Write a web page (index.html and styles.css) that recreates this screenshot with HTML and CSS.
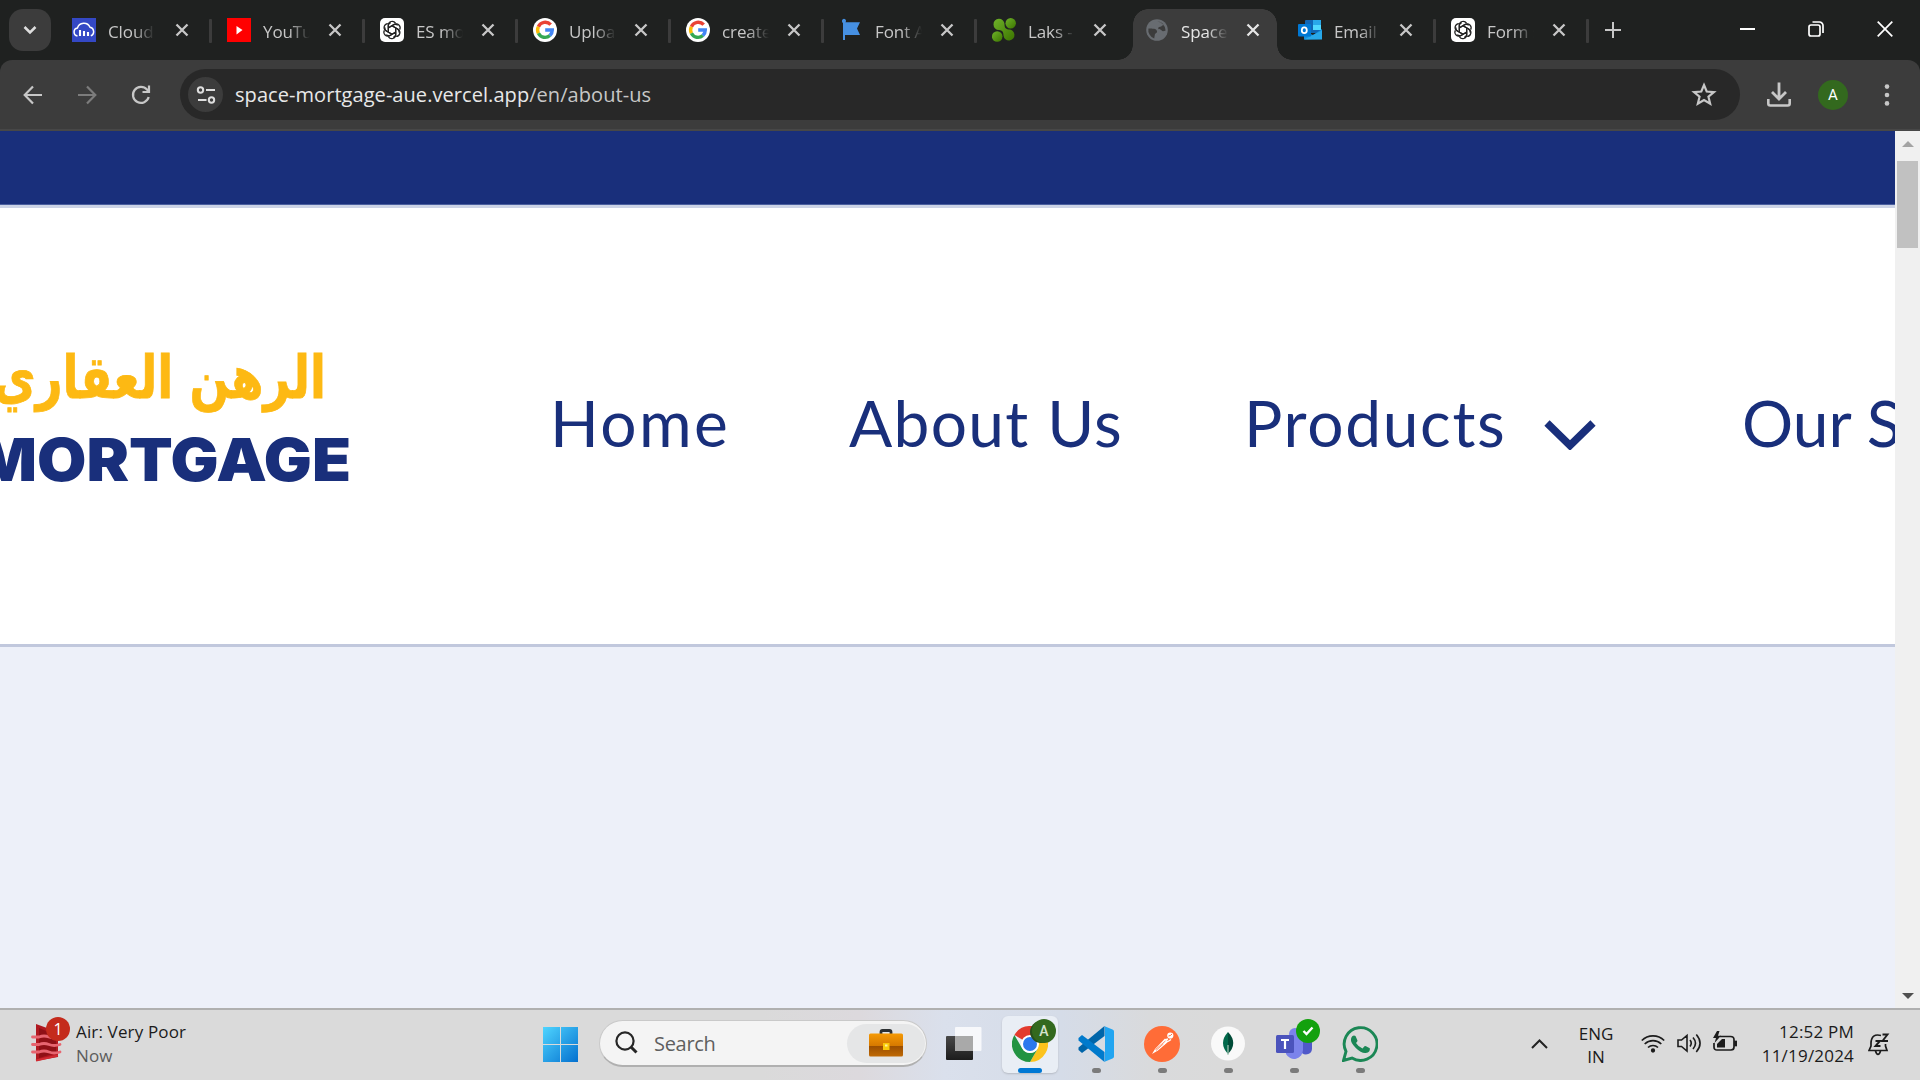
FILE: index.html
```html
<!DOCTYPE html>
<html lang="en">
<head>
<meta charset="utf-8">
<title>Space Mortgage</title>
<link rel="stylesheet" href="styles.css">
</head>
<body>
<svg width="0" height="0" class="defs">
  <defs>
    <symbol id="x" viewBox="0 0 14 14"><path d="M1.500 1.500l11 11M12.500 1.500l-11 11" fill="none" stroke="currentColor" stroke-width="2.300"/></symbol>
    <symbol id="gpt" viewBox="0 0 24 24"><rect width="24" height="24" rx="5" fill="#fff"/>
      <g fill="none" stroke="#222" stroke-width="1.250" stroke-linejoin="round">
        <g id="petal"><path d="M8.300 13.800V7.200a3.900 3.900 0 0 1 7.200-2M8.300 9.900l5.200-3.100a3.800 3.800 0 0 1 4.300.4"/></g>
        <use href="#petal" transform="rotate(60 12 12)"/><use href="#petal" transform="rotate(120 12 12)"/><use href="#petal" transform="rotate(180 12 12)"/><use href="#petal" transform="rotate(240 12 12)"/><use href="#petal" transform="rotate(300 12 12)"/>
      </g></symbol>
    <symbol id="google" viewBox="0 0 24 24"><circle cx="12" cy="12" r="12" fill="#fff"/>
      <g fill="none" stroke-width="3.400"><path d="M17.700 6.700A7.400 7.400 0 0 0 5.400 8.700" stroke="#ea4335"/><path d="M5.400 8.700a7.400 7.400 0 0 0 0 6.600" stroke="#fbbc05"/><path d="M5.400 15.300a7.400 7.400 0 0 0 11.500 2.200" stroke="#34a853"/><path d="M12.200 12H19.300a7.400 7.400 0 0 1-2.400 5.500" stroke="#4285f4"/></g></symbol>
    <linearGradient id="leaf" x1="0" y1="0" x2="1" y2="1"><stop offset="0" stop-color="#6fb22a"/><stop offset="1" stop-color="#3c7500"/></linearGradient>
    <linearGradient id="win" x1="0" y1="0" x2="1" y2="1"><stop offset="0" stop-color="#4fd5ff"/><stop offset="1" stop-color="#0470cf"/></linearGradient>
    <linearGradient id="bag" x1="0" y1="0" x2="0" y2="1"><stop offset="0" stop-color="#f59a05"/><stop offset=".55" stop-color="#d57800"/><stop offset=".56" stop-color="#9c4f00"/><stop offset="1" stop-color="#c06a05"/></linearGradient>
    <linearGradient id="dark" x1="0" y1="0" x2="0" y2="1"><stop offset="0" stop-color="#484848"/><stop offset="1" stop-color="#1c1c1c"/></linearGradient>
  </defs>
</svg>
<div class="screen">
  <header class="tabstrip">
    <div class="tab-search"><svg width="14" height="10" viewBox="0 0 14 10"><path d="M1.500 2l5.500 5.500L12.500 2" fill="none" stroke="#dedede" stroke-width="2.500"/></svg></div>
    <div class="tabs">
      <div class="tab first"><svg class="fav" viewBox="0 0 24 24"><rect width="24" height="24" fill="#3448c5"/><path d="M5.500 18a4 4 0 0 1-.1-7.900A6.700 6.700 0 0 1 18 9.200 4.500 4.500 0 0 1 18.800 17.800" fill="none" stroke="#fff" stroke-width="1.500"/><path d="M8 12v6M12 13v5M16 14v4" stroke="#fff" stroke-width="2.100"/></svg><span class="title">Cloudin</span><svg class="close"><use href="#x"/></svg></div>
      <div class="tab"><svg class="fav" viewBox="0 0 24 24"><rect width="24" height="24" fill="#f00"/><path d="M9.500 8l6 4-6 4.500z" fill="#fff"/></svg><span class="title">YouTube</span><svg class="close"><use href="#x"/></svg></div>
      <div class="tab"><svg class="fav"><use href="#gpt"/></svg><span class="title">ES mod</span><svg class="close"><use href="#x"/></svg></div>
      <div class="tab"><svg class="fav"><use href="#google"/></svg><span class="title">Upload</span><svg class="close"><use href="#x"/></svg></div>
      <div class="tab"><svg class="fav"><use href="#google"/></svg><span class="title">create r</span><svg class="close"><use href="#x"/></svg></div>
      <div class="tab"><svg class="fav" viewBox="0 0 24 24"><path d="M3 3a2 2 0 1 1 3.500 1.200H21l-3 6.300 3 6.500H6v5H4V5a2 2 0 0 1-1-2z" fill="#4690e2"/></svg><span class="title">Font A</span><svg class="close"><use href="#x"/></svg></div>
      <div class="tab last-before"><svg class="fav" viewBox="0 0 24 24"><g fill="url(#leaf)"><circle cx="18.700" cy="5.200" r="5.200"/><circle cx="5.200" cy="18.500" r="5.300"/><path d="M1.500 6.500a5.500 5.500 0 0 1 11-.5c0 3 .6 5 4 5.500a5.500 5.500 0 1 1-5 6c0-3.500-1-5.200-4.500-5.500a5.500 5.500 0 0 1-5.500-5.500z"/></g></svg><span class="title">Laks - S</span><svg class="close"><use href="#x"/></svg></div>
      <div class="tab active"><svg class="fav" viewBox="0 0 24 24"><circle cx="12" cy="12" r="10.800" fill="#686c71"/><path d="M3.400 10.600c4 .2 8-.3 8.600 2.600.4 2-2 1.700-2.200 3.800l-.6 3.500A9 9 0 0 1 3.400 10.600zM12.500 3.500c2.600 0 5 1.500 6.300 3.500-1.500 0-2 1.700-3.600 1.700-1.500 0-2.600 1-1.800 2.200.8 1 2.600.1 3.300 1.600.4 1 2.300.8 3.900-.1A9 9 0 0 0 12.500 3.500z" fill="#3c3c3c"/></svg><span class="title">Space M</span><svg class="close"><use href="#x"/></svg></div>
      <div class="tab"><svg class="fav" viewBox="0 0 24 24"><rect x="7" y="2" width="16" height="13" rx="1" fill="#1066b5"/><path d="M15 2h8v5h-8z" fill="#28a8ea"/><path d="M15 7h8v5h-8z" fill="#50d9ff"/><path d="M6 21.500V13l9 4 9-6v10z" fill="#1490df"/><path d="M6 21.500l18-9v9z" fill="#28a8ea"/><rect y="6" width="13" height="12.500" rx="1" fill="#0078d4"/><ellipse cx="6.300" cy="12.200" rx="2.500" ry="2.900" fill="none" stroke="#fff" stroke-width="1.800"/></svg><span class="title">Email -</span><svg class="close"><use href="#x"/></svg></div>
      <div class="tab"><svg class="fav"><use href="#gpt"/></svg><span class="title">Form s</span><svg class="close"><use href="#x"/></svg></div>
    </div>
    <svg class="plus" viewBox="0 0 16 16"><path d="M8 0v16M0 8h16" stroke="#c7c7c7" stroke-width="2"/></svg>
    <div class="window-buttons">
      <svg width="15" height="16" viewBox="0 0 15 16"><path d="M0 8h15" stroke="#fff" stroke-width="2"/></svg>
      <svg width="16" height="16" viewBox="0 0 16 16" fill="none" stroke="#fff" stroke-width="1.700"><rect x="1" y="4" width="11" height="11" rx="2"/><path d="M4.500 1H11.500a3.500 3.500 0 0 1 3.500 3.500V12"/></svg>
      <svg width="16" height="16" viewBox="0 0 16 16"><path d="M.7.7l14.600 14.600M15.300.7L.7 15.300" stroke="#fff" stroke-width="1.700"/></svg>
    </div>
  </header>

  <div class="toolbar">
    <div class="nav-buttons">
      <svg width="20" height="20" viewBox="0 0 20 20"><path d="M19 10H2M10 1.500L1.700 10l8.300 8.500" fill="none" stroke="#c7c7c7" stroke-width="2.200"/></svg>
      <svg width="20" height="20" viewBox="0 0 20 20"><path d="M1 10h17M10 1.500l8.300 8.500L10 18.500" fill="none" stroke="#7c7c7c" stroke-width="2.200"/></svg>
      <svg width="20" height="20" viewBox="0 0 20 20"><path d="M17.700 12A8 8 0 1 1 16 4.600L18 7M18 .5V7H11.500" fill="none" stroke="#c7c7c7" stroke-width="2.200"/></svg>
    </div>
    <div class="omnibox">
      <div class="site-info"><svg width="20" height="18" viewBox="0 0 20 18" fill="none" stroke="#dedede" stroke-width="2"><circle cx="4.500" cy="4" r="2.700"/><path d="M10 4h9M2 14h8.500"/><circle cx="15.500" cy="14" r="2.700"/></svg></div>
      <div class="url"><span class="host">space-mortgage-aue.vercel.app</span><span class="path">/en/about-us</span></div>
      <svg class="star" viewBox="0 0 24 24"><path d="M12 2.800l2.500 6 6.700.5-5.100 4.300 1.600 6.500L12 16.600l-5.700 3.500 1.600-6.500L2.800 9.300l6.700-.5z" fill="none" stroke="#c7c7c7" stroke-width="2"/></svg>
    </div>
    <svg class="download" viewBox="0 0 24 26"><path d="M12 .5v16M5 10l7 7 7-7" fill="none" stroke="#c7c7c7" stroke-width="2.800"/><path d="M1.300 17v4.500a2 2 0 0 0 2 2h17.400a2 2 0 0 0 2-2V17" fill="none" stroke="#c7c7c7" stroke-width="2.600"/></svg>
    <div class="profile">A</div>
    <svg class="dots" viewBox="0 0 6 22" fill="#c7c7c7"><circle cx="3" cy="2.600" r="2.300"/><circle cx="3" cy="11" r="2.300"/><circle cx="3" cy="19.400" r="2.300"/></svg>
  </div>

  <main class="viewport">
    <div class="page">
      <div class="topbar"></div>
      <div class="site-header">
        <svg class="logo" width="360" height="160" viewBox="0 0 360 160">
          <text class="logo-ar" x="-7" y="67" textLength="333" lengthAdjust="spacingAndGlyphs">الرهن العقاري</text>
          <text class="logo-en" x="-24" y="150" textLength="375" lengthAdjust="spacingAndGlyphs">MORTGAGE</text>
        </svg>
        <nav class="site-nav">
          <a class="home">Home</a>
          <a class="about">About Us</a>
          <a class="products">Products</a>
          <svg class="chev" width="52" height="30" viewBox="0 0 52 30"><path d="M3 3L26 25.500 49 3" fill="none" stroke="#192f7b" stroke-width="7.500"/></svg>
          <a class="services">Our Services</a>
        </nav>
      </div>
    </div>
    <div class="scrollbar">
      <svg width="12" height="6" viewBox="0 0 12 6"><path d="M0 6L6 0l6 6z" fill="#a3a3a3"/></svg>
      <div class="thumb"></div>
      <svg class="down" width="12" height="6" viewBox="0 0 12 6"><path d="M0 0h12L6 6z" fill="#505050"/></svg>
    </div>
  </main>

  <footer class="taskbar">
    <div class="widget">
      <div class="air"><svg width="32" height="38" viewBox="0 0 32 38"><path d="M5 0l22 8v25L5 37z" fill="#b01820"/><path d="M8 4l17 7v18L8 34z" fill="#8f1016"/><g fill="none" stroke="#e76570" stroke-width="2.800" stroke-linecap="round"><path d="M1.500 13H8q5-2 10 0t11 0M1.500 20.500H8q5-2 10 0t11 0M1.500 28H8q5-2 10 0t11 0"/></g><path d="M5 36.500l22-5" stroke="#d12a32" stroke-width="2"/></svg><span class="count">1</span></div>
      <div class="air-text"><span>Air: Very Poor</span><span class="now">Now</span></div>
    </div>
    <svg class="start" viewBox="0 0 35 35"><path d="M0 0h17v17H0zM18 0h17v17H18zM0 18h17v17H0zM18 18h17v17H18z" fill="url(#win)"/></svg>
    <div class="search">
      <svg width="23" height="24" viewBox="0 0 23 24"><circle cx="10" cy="10" r="8.600" fill="none" stroke="#262626" stroke-width="2.200"/><path d="M16 16l5.500 5.500" stroke="#262626" stroke-width="3"/></svg>
      <span>Search</span>
      <div class="highlight"><svg width="34" height="28" viewBox="0 0 34 28"><path d="M12 5V3q0-1.500 1.500-1.500h7Q22 1.500 22 3v2" fill="none" stroke="#2c3033" stroke-width="2.800"/><rect y="4.500" width="34" height="23" rx="1.500" fill="url(#bag)"/><rect x="14" y="14" width="6.500" height="7" fill="#f8c90a"/><rect x="16" y="15.500" width="2.500" height="2" fill="#fff29a"/></svg></div>
    </div>
    <div class="apps">
      <div class="app"><svg width="36" height="36" viewBox="0 0 36 36"><rect y="10" width="27" height="24" rx="1" fill="url(#dark)"/><rect x="9" y="1" width="26.500" height="24" rx="1" fill="#fff" fill-opacity=".78"/><rect x="9" y="10" width="18" height="15" fill="#a9a9a9"/></svg></div>
      <div class="app current"><svg width="36" height="36" viewBox="0 0 36 36"><path d="M18 18L2.400 9A18 18 0 0 1 33.600 9z" fill="#e33b2e"/><path d="M18 0a18 18 0 0 1 15.600 9H18z" fill="#e33b2e"/><path d="M18 9h15.600A18 18 0 0 1 18 36l7.800-13.500z" fill="#fcc31e"/><path d="M2.400 9l7.800 13.500A9 9 0 0 0 25.800 22.500L18 36A18 18 0 0 1 2.400 9z" fill="#229342"/><circle cx="18" cy="18" r="9" fill="#fff"/><circle cx="18" cy="18" r="7" fill="#2c78ee"/></svg><span class="badge green">A</span><i></i></div>
      <div class="app"><svg width="36" height="36" viewBox="0 0 36 36"><path d="M26.500 0v10L4 27l-3.500-3v-2.500z" fill="#0065a9"/><path d="M4 9L.5 12v2.500L26.500 36V26z" fill="#007acc"/><path d="M26 0l8.500 3.500q1.500.7 1.500 2v25q0 1.300-1.500 2L26 36q1-.5 1-2V2q0-1.500-1-2z" fill="#22a5f1"/></svg><i></i></div>
      <div class="app"><svg width="36" height="36" viewBox="0 0 36 36"><circle cx="18" cy="18" r="18" fill="#ff6c37"/><path d="M8 28l3-5L21 12.500l3.500 3L14 24.500z" fill="#fff"/><path d="M11.500 23.500l11-9.500M12 24.500l9.500-8.500" stroke="#ff6c37" stroke-width=".7"/><circle cx="26.300" cy="9.500" r="3.100" fill="#fff"/><path d="M24 13l-3 1M24 15.500l3-2M23 15l-3.500 3.500" stroke="#fff" stroke-width="1.500"/><path d="M24.500 10q2 0 3.500-2" fill="none" stroke="#ff6c37" stroke-width="1"/></svg><i></i></div>
      <div class="app"><svg width="36" height="36" viewBox="0 0 36 36"><circle cx="18" cy="17.500" r="17" fill="#f9f9f9"/><path d="M18 6q-10 11 0 22z" fill="#01684a"/><path d="M18 6q10.500 11 0 22z" fill="#004b37"/><path d="M18 19v10" stroke="#a8c9b7" stroke-width="1.200"/></svg><i></i></div>
      <div class="app teams"><svg width="36" height="36" viewBox="0 0 36 36"><circle cx="30" cy="8" r="4.500" fill="#5059c9"/><path d="M25 13h11v10a6 6 0 0 1-10 4z" fill="#5059c9"/><circle cx="19" cy="8" r="6" fill="#7b83eb"/><path d="M10 12h17v12a9 9 0 0 1-17 4z" fill="#7b83eb"/><rect x="0" y="9" width="18" height="18" rx="1.500" fill="#4b53bc"/><path d="M5 14h8M9 14v9" stroke="#fff" stroke-width="2.200"/></svg><span class="badge check"><svg width="12" height="10" viewBox="0 0 12 10"><path d="M1.500 5l3 3 6-6.500" fill="none" stroke="#fff" stroke-width="2.400"/></svg></span><i></i></div>
      <div class="app"><svg width="36" height="36" viewBox="0 0 36 36"><path d="M1.500 34.500l2.500-9A16.400 16.400 0 1 1 10 32z" fill="none" stroke="#1b8755" stroke-width="2.900"/><path d="M10.500 10q1.500-1 3 0l2 4.500q0 1.200-1.500 2.500 2.500 4 6.500 5.500l2-2.300q.7-.5 1.500 0l3.800 2q.7 4-4 4.800-4.500.5-10-5T9 13q.3-2 1.500-3z" fill="#1b8755"/></svg><i></i></div>
    </div>
    <div class="tray">
      <svg class="up" width="17" height="10" viewBox="0 0 17 10"><path d="M1 9l7.500-7.500L16 9" fill="none" stroke="#222" stroke-width="2"/></svg>
      <div class="lang"><span>ENG</span><span>IN</span></div>
      <div class="status">
        <svg width="24" height="24" viewBox="0 0 24 24" fill="none" stroke="#1c1c1c" stroke-width="1.700"><path d="M.8 9.500a16 16 0 0 1 22.400 0M3.700 13a12 12 0 0 1 16.600 0M7 16.500a7.300 7.300 0 0 1 10 0"/><circle cx="12" cy="19.500" r="1.300" fill="#1c1c1c"/></svg>
        <svg width="24" height="24" viewBox="0 0 24 24" fill="none" stroke="#1c1c1c" stroke-width="1.600"><path d="M1 9v6.500h3.500L10 20V4.500L4.500 9zM13 9q2.500 3.200 0 6.400M16 6.500q5 5.700 0 11.500M19.300 3.500q7.500 8.700 0 17.400"/></svg>
        <svg width="24" height="24" viewBox="0 0 24 24" fill="none" stroke="#1c1c1c" stroke-width="1.700"><path d="M7 5.500h10.500q3.500 0 3.500 3.200V16q0 3-3 3H4q-3 0-3-3v-4"/><path d="M22 10.500h1.200v4H22z" fill="#1c1c1c"/><path d="M4 16V13l5-5h3v8.500H4z" fill="#1c1c1c" stroke="none"/><path d="M4 0L0 7H3L1.500 12 8 4.800H5L6.500 0z" fill="#1c1c1c" stroke="none"/></svg>
      </div>
      <div class="clock"><span class="time">12:52 PM</span><span class="date">11/19/2024</span></div>
      <svg class="bell" width="22" height="24" viewBox="0 0 22 24" fill="none" stroke="#1c1c1c" stroke-width="1.700"><path d="M13 3.500Q3.500 1 3 11v3L1 18.500h18L17.500 14v-2M7.500 19q1 3.300 2.500 3.300T12.500 19"/><path d="M7.500 9h4.500l-4.500 5H12.500M14.500 2.500h5l-5 6.500H20" stroke-width="1.900"/></svg>
    </div>
  </footer>
</div>
</body>
</html>
```

FILE: styles.css
```css
* { box-sizing: border-box; }
body { margin: 0; overflow: hidden; font-family: "Open Sans", "Noto Sans", sans-serif; }
svg { display: block; flex: none; }
.defs { position: absolute; }
.screen { width: 1920px; height: 1080px; display: flex; flex-direction: column; overflow: hidden; background: #1f2120; }

/* Tab strip */
.tabstrip { height: 60px; flex: none; background: #1f2120; display: flex; align-items: flex-start; padding-left: 9px; }
.tab-search { width: 42px; height: 42px; margin-top: 9px; border-radius: 14px; background: #3c3c3c; display: flex; align-items: center; justify-content: center; }
.tabs { display: flex; margin-left: 8px; }
.tab { width: 153px; height: 51px; margin-top: 9px; padding: 9px 0 0 15px; display: flex; align-items: flex-start; color: #c7c7c7; position: relative; }
.tab::after { content: ""; width: 3px; height: 24px; margin: 1px 0 0 auto; background: #3c3c3c; border-radius: 1px; }
.tab.first { padding-left: 13px; }
.tab.first .close { margin-left: 20px; }
.tab.last-before::after, .tab.active::after { background: transparent; }
.fav { width: 24px; height: 24px; }
.title { width: 47px; height: 26px; margin: 1px 0 0 12px; overflow: hidden; white-space: nowrap; font-size: 17px; line-height: 25px; letter-spacing: -0.1px; -webkit-mask-image: linear-gradient(90deg, #000 55%, transparent); mask-image: linear-gradient(90deg, #000 55%, transparent); }
.close { width: 14px; height: 14px; margin: 5px 0 0 17.500px; }
.tab.active { color: #e6e6e6; }
.tab.active::before { content: ""; position: absolute; z-index: 0; left: -12px; bottom: 0; width: 174px; height: 51px; background: radial-gradient(circle at 0 0, transparent 14.500px, #3c3c3c 15px) 0 100% / 15px 15px no-repeat, radial-gradient(circle at 100% 0, transparent 14.500px, #3c3c3c 15px) 100% 100% / 15px 15px no-repeat, linear-gradient(#3c3c3c, #3c3c3c) 15px 100% / 144px 36px no-repeat, radial-gradient(circle at 15px 15px, #3c3c3c 14.500px, transparent 15px) 15px 0 / 15px 15px no-repeat, radial-gradient(circle at 0 15px, #3c3c3c 14.500px, transparent 15px) 144px 0 / 15px 15px no-repeat, linear-gradient(#3c3c3c, #3c3c3c) 30px 0 / 114px 15px no-repeat; }
.tab.active > * { position: relative; z-index: 1; }
.plus { width: 16px; height: 16px; margin: 22px 0 0 16px; }
.window-buttons { display: flex; gap: 53px; margin: 21px 27px 0 auto; }

/* Toolbar */
.toolbar { height: 71px; flex: none; display: flex; align-items: center; background: #3c3c3c; border-bottom: 2px solid #474747; border-radius: 12px 12px 0 0; padding: 0 27px 0 23px; }
.nav-buttons { display: flex; gap: 34px; width: 157px; }
.omnibox { width: 1560px; height: 51px; border-radius: 26px; background: #282828; display: flex; align-items: center; padding-left: 8px; }
.site-info { width: 35px; height: 35px; border-radius: 50%; background: #3c3c3c; display: flex; align-items: center; justify-content: center; }
.url { margin-left: 12px; font-size: 20px; line-height: 28px; white-space: nowrap; color: #c7c7c7; letter-spacing: 0.06px; }
.host { color: #e8e8e8; }
.star { width: 26px; height: 26px; margin: 0 23px 0 auto; }
.download { width: 24px; height: 26px; margin-left: 27px; }
.profile { width: 30px; height: 30px; margin-left: 27px; border-radius: 50%; background: #33691e; color: #fff; font: 400 15px/31px Roboto, sans-serif; text-align: center; }
.dots { width: 6px; height: 22px; margin-left: auto; margin-right: 3px; }

/* Web page */
.viewport { flex: 1; min-height: 0; display: flex; background: #edf0f9; }
.page { width: 1895px; overflow: hidden; }
.topbar { height: 74px; background: #192f7b; border-bottom: 1px solid #4b5f9f; }
.site-header { height: 442px; background: #fff; border-top: 3px solid #ccd3e6; border-bottom: 3px solid #c1c8dd; display: flex; align-items: flex-start; overflow: hidden; }
.logo { margin-top: 123px; overflow: visible; }
.logo-ar { font: bold 59px "DejaVu Sans", sans-serif; fill: #fdb913; stroke: #fdb913; stroke-width: 0.8px; }
.logo-en { font: 900 59px Inter, sans-serif; fill: #192f7b; }
.site-nav { display: flex; align-items: flex-start; margin-top: 170px; font: 400 64px/90px Lato, sans-serif; color: #192f7b; white-space: nowrap; }
.site-nav a { flex: none; }
.home { width: 299px; margin-left: 190px; letter-spacing: 2.400px; }
.about { width: 395px; letter-spacing: 1.300px; }
.products { width: 300px; letter-spacing: 1.700px; }
.chev { margin: 42px 0 0 0; }
.services { margin-left: 146px; }
.scrollbar { width: 25px; background: #f0f0f0; display: flex; flex-direction: column; align-items: center; padding: 10px 0 9px; }
.thumb { width: 21px; height: 87px; margin-top: 14px; background: #c1c1c1; }
.down { margin-top: auto; }

/* Taskbar */
.taskbar { height: 72px; flex: none; border-top: 2px solid #b0b0b0; background: linear-gradient(90deg, #dadada 760px, #dcd9dd 860px, #dae0ec 945px, #d5dce8 1060px, #d9dadc 1150px, #dadada 1220px); display: flex; align-items: flex-start; color: #1b1b1b; font-size: 17px; }
.widget { width: 543px; display: flex; padding-left: 31px; }
.air { position: relative; width: 45px; padding-top: 14px; }
.count { position: absolute; left: 15px; top: 7px; width: 24px; height: 24px; border-radius: 50%; background: #c42b1c; color: #fff; font-size: 16px; line-height: 24px; text-align: center; }
.air-text { display: flex; flex-direction: column; line-height: 24px; padding-top: 10px; white-space: nowrap; letter-spacing: 0.15px; }
.now { color: #5c5c5c; }
.start { width: 35px; height: 35px; margin-top: 17px; }
.search { width: 328px; height: 47px; margin: 10px 0 0 21px; padding: 0 1px 0 15px; border: 1px solid #c9c9c9; border-bottom: 2px solid #b0b0b0; border-radius: 24px; background: #f4f4f4; display: flex; align-items: center; color: #5f5f5f; font-size: 20px; }
.search span { margin-left: 16px; letter-spacing: -0.3px; }
.highlight { width: 78px; height: 39px; margin-left: auto; border-radius: 20px; background: #e5e6e7; display: flex; align-items: center; justify-content: center; }
.apps { display: flex; margin-left: 4px; }
.app { width: 66px; height: 68px; padding-top: 16px; display: flex; justify-content: center; position: relative; }
.app i { position: absolute; left: 29px; top: 58px; width: 9px; height: 5px; border-radius: 3px; background: #7b7b7b; }
.app.current { width: 56px; height: 57px; margin: 6px 5px 0; padding-top: 10px; background: #e9eef5; border-radius: 6px; box-shadow: 0 1px 2px #b5bac3; }
.app.current i { left: 16px; top: 52px; width: 24px; background: #0078d4; }
.badge { position: absolute; width: 24px; height: 24px; border-radius: 50%; }
.badge.green { left: 30px; top: 3px; background: #33691e; color: #d5e3cf; font: 500 14px/25px Roboto, sans-serif; text-align: center; box-shadow: -3px 1px 0 -1px #28501c; }
.badge.check { left: 35px; top: 9px; background: #13a10e; display: flex; align-items: center; justify-content: center; }
.tray { display: flex; align-items: flex-start; margin-left: auto; padding-right: 30px; white-space: nowrap; }
.up { margin-top: 29px; }
.lang { width: 50px; margin: 12px 1px 0 23px; display: flex; flex-direction: column; align-items: center; line-height: 23px; letter-spacing: -0.1px; }
.status { display: flex; gap: 12px; margin: 21px 0 0 19px; }
.clock { width: 100px; margin: 10px 0 0 17px; display: flex; flex-direction: column; align-items: flex-end; line-height: 24px; letter-spacing: 0.2px; }
.bell { margin: 22px 0 0 14px; }
```
